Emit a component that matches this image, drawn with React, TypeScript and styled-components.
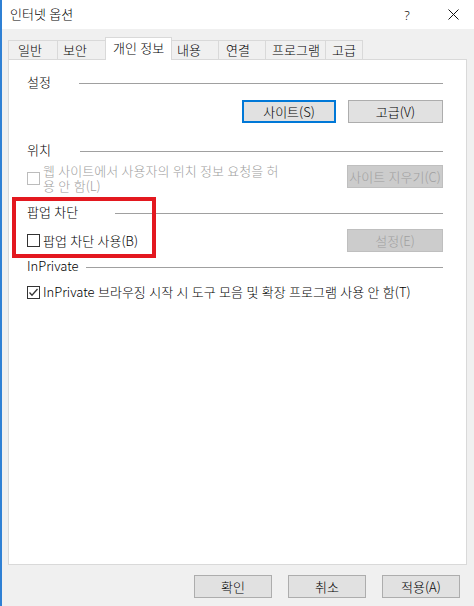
import React from 'react';
import styled, { createGlobalStyle } from 'styled-components';

const GlobalStyle = createGlobalStyle`
  html, body {
    margin: 0;
    padding: 0;
    background: #f0f0f0;
  }
  body {
    font-family: 'Noto Sans CJK KR', 'Noto Sans', sans-serif;
    font-size: 13px;
    font-weight: 300;
    word-spacing: 0.5px;
    color: #000;
  }
  * {
    box-sizing: border-box;
  }
`;

const tabs = [
  { label: '일반', w: 50, pl: 10 },
  { label: '보안', w: 49, pl: 6 },
  { label: '개인 정보', w: 67, pl: 8, active: true },
  { label: '내용', w: 48, pl: 6 },
  { label: '연결', w: 48, pl: 8 },
  { label: '프로그램', w: 61, pl: 7 },
  { label: '고급', w: 38, pl: 7 },
];

const CheckMark = () => (
  <svg width="11" height="11" viewBox="0 0 11 11">
    <path d="M1.5 5.5 L4 8.2 L9.5 2" fill="none" stroke="#333" strokeWidth="1.3" />
  </svg>
);

const CloseIcon = () => (
  <svg width="11" height="11" viewBox="0 0 11 11">
    <path d="M0.5 0.5 L10.5 10.5 M10.5 0.5 L0.5 10.5" stroke="#111" strokeWidth="1" />
  </svg>
);

const Heading = ({ label, lw }: { label: string; lw: number }) => (
  <HeadingRow $lw={lw}>
    <span>{label}</span>
    <Rule />
  </HeadingRow>
);

const App = () => {
  return (
    <>
      <GlobalStyle />
      <Window>
        <TitleBar>
          <Title>인터넷 옵션</Title>
          <Controls>
            <HelpButton>?</HelpButton>
            <CloseButton>
              <CloseIcon />
            </CloseButton>
          </Controls>
        </TitleBar>

        <Body>
          <TabStrip>
            {tabs.map((t) => (
              <Tab key={t.label} $w={t.w} $pl={t.pl} $active={!!t.active}>
                {t.label}
              </Tab>
            ))}
          </TabStrip>

          <Panel>
            <Heading label="설정" lw={52} />
            <ButtonRow>
              <PushButton $w={94} $focused>
                사이트(S)
              </PushButton>
              <PushButton $w={95}>고급(V)</PushButton>
            </ButtonRow>

            <Section $mt={19}>
              <Heading label="위치" lw={53} />
            </Section>
            <OptionRow $mt={5}>
              <CheckLabel>
                <CheckBox $disabled />
                <OptionText $disabled>
                  웹 사이트에서 사용자의 위치 정보 요청을 허<br />용 안 함(L)
                </OptionText>
              </CheckLabel>
              <PushButton $w={96} $disabled $top>
                사이트 지우기(C)
              </PushButton>
            </OptionRow>

            <Section $mt={11}>
              <Heading label="팝업 차단" lw={88} />
            </Section>
            <OptionRow $mt={9} $center>
              <CheckLabel>
                <CheckBox />
                <OptionText>팝업 차단 사용(B)</OptionText>
              </CheckLabel>
              <PushButton $w={96} $disabled>
                설정(E)
              </PushButton>
            </OptionRow>

            <Section $mt={6}>
              <Heading label="InPrivate" lw={59} />
            </Section>
            <OptionRow $mt={10} $center>
              <CheckLabel>
                <CheckBox>
                  <CheckMark />
                </CheckBox>
                <OptionText>InPrivate 브라우징 시작 시 도구 모음 및 확장 프로그램 사용 안 함(T)</OptionText>
              </CheckLabel>
            </OptionRow>

            <Highlight />
          </Panel>
        </Body>

        <Footer>
          <PushButton $w={78}>확인</PushButton>
          <PushButton $w={78}>취소</PushButton>
          <PushButton $w={78}>적용(A)</PushButton>
        </Footer>
      </Window>
    </>
  );
};

export default App;

const Window = styled.div`
  width: 474px;
  height: 606px;
  display: flex;
  flex-direction: column;
  background: #f0f0f0;
  border-left: 2px solid #2f80d4;
  overflow: hidden;
`;

const TitleBar = styled.div`
  height: 29px;
  flex: none;
  display: flex;
  align-items: center;
  background: #fff;
  padding-left: 8px;
`;

const Title = styled.span`
  line-height: 16px;
  margin-top: -1px;
`;

const Controls = styled.div`
  margin-left: auto;
  display: flex;
  align-items: center;
  height: 100%;
  margin-right: 1px;
`;

const HelpButton = styled.div`
  width: 46px;
  text-align: center;
  font-family: 'Noto Sans', sans-serif;
  font-size: 13px;
  font-weight: 300;
  line-height: 16px;
`;

const CloseButton = styled.div`
  width: 40px;
  margin-left: 3px;
  display: flex;
  justify-content: center;
  align-items: center;
`;

const Body = styled.div`
  padding: 8px 6px 0 6px;
  flex: none;
`;

const TabStrip = styled.div`
  display: flex;
  align-items: flex-end;
  height: 22px;
  position: relative;
  z-index: 1;
`;

const Tab = styled.div<{ $w: number; $pl: number; $active: boolean }>`
  width: ${(p) => p.$w}px;
  height: ${(p) => (p.$active ? 23 : 19)}px;
  margin-left: -1px;
  margin-bottom: ${(p) => (p.$active ? -1 : 0)}px;
  padding-left: ${(p) => p.$pl - 1}px;
  padding-bottom: ${(p) => (p.$active ? 2 : 0)}px;
  display: flex;
  align-items: center;
  border: 1px solid #d9d9d9;
  border-bottom: none;
  background: ${(p) => (p.$active ? '#fff' : '#f0f0f0')};
  white-space: nowrap;
  line-height: 16px;
  position: relative;
  z-index: ${(p) => (p.$active ? 2 : 1)};

  &:first-child {
    margin-left: 0;
  }
`;

const Panel = styled.div`
  position: relative;
  width: 459px;
  height: 506px;
  background: #fff;
  border: 1px solid #d9d9d9;
  padding: 14px 23px 0 18px;
`;

const HeadingRow = styled.div<{ $lw: number }>`
  display: grid;
  grid-template-columns: ${(p) => p.$lw}px 1fr;
  align-items: center;
  height: 16px;
  line-height: 16px;
  white-space: nowrap;
`;

const Rule = styled.div`
  height: 1px;
  background: #a0a0a0;
  margin-top: 3px;
`;

const Section = styled.div<{ $mt: number }>`
  margin-top: ${(p) => p.$mt}px;
`;

const ButtonRow = styled.div`
  display: flex;
  justify-content: flex-end;
  gap: 12px;
  margin-top: 10px;
`;

const OptionRow = styled.div<{ $mt: number; $center?: boolean }>`
  display: flex;
  justify-content: space-between;
  align-items: ${(p) => (p.$center ? 'center' : 'flex-start')};
  margin-top: ${(p) => p.$mt}px;
  min-height: ${(p) => (p.$center ? 16 : 0)}px;
`;

const CheckLabel = styled.div`
  display: flex;
  align-items: center;
  gap: 3px;
`;

const CheckBox = styled.div<{ $disabled?: boolean }>`
  width: 13px;
  height: 13px;
  flex: none;
  border: 1px solid ${(p) => (p.$disabled ? '#bcbcbc' : '#333')};
  background: #fff;
  display: flex;
  align-items: center;
  justify-content: center;
`;

const OptionText = styled.span<{ $disabled?: boolean }>`
  color: ${(p) => (p.$disabled ? '#a0a0a0' : '#000')};
  line-height: ${(p) => (p.$disabled ? 15 : 16)}px;
  white-space: nowrap;
`;

const PushButton = styled.div<{ $w: number; $focused?: boolean; $disabled?: boolean; $top?: boolean }>`
  width: ${(p) => p.$w}px;
  height: 23px;
  flex: none;
  display: flex;
  align-items: center;
  justify-content: center;
  white-space: nowrap;
  line-height: 16px;
  margin-top: ${(p) => (p.$top ? 2 : 0)}px;
  background: ${(p) => (p.$disabled ? '#cccccc' : '#e1e1e1')};
  color: ${(p) => (p.$disabled ? '#a0a0a0' : '#000')};
  border: ${(p) =>
    p.$focused ? '2px solid #0078d7' : p.$disabled ? '1px solid #bfbfbf' : '1px solid #adadad'};
`;

const Highlight = styled.div`
  position: absolute;
  left: 3px;
  top: 137px;
  width: 144px;
  height: 61px;
  border: 4px solid #e3181f;
  pointer-events: none;
`;

const Footer = styled.div`
  display: flex;
  justify-content: flex-end;
  gap: 16px;
  padding: 10px 14px 0 0;
`;
